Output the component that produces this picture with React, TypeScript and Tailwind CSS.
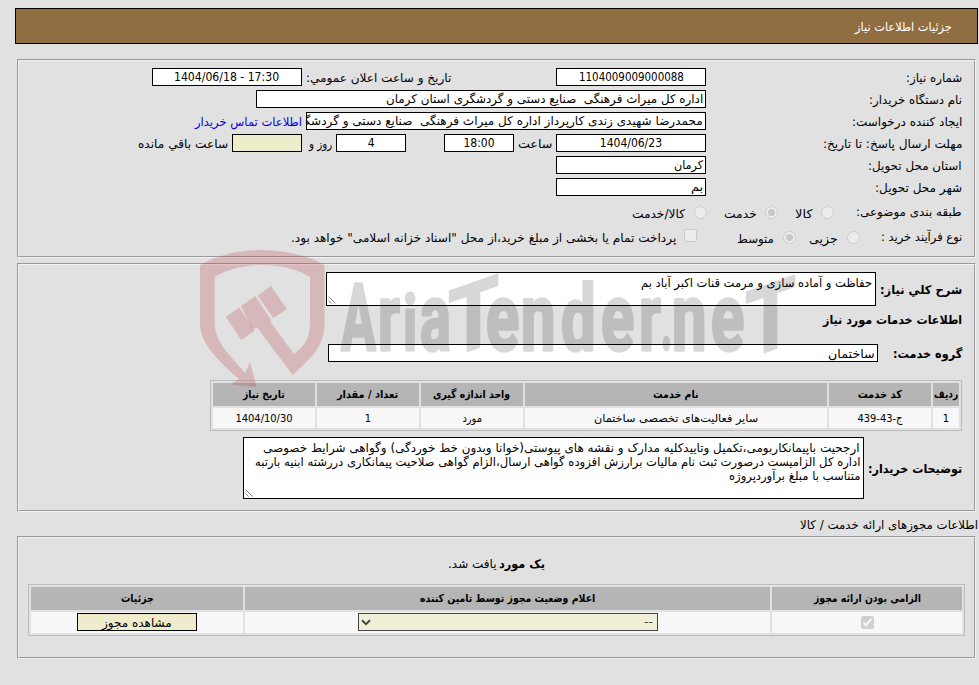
import React, { useLayoutEffect, useRef, useState } from 'react';

// Keeps a single line of text at a fixed advance width
const Fit: React.FC<{ w: number; children: React.ReactNode; className?: string }> = ({ w, children, className = '' }) => {
  const ref = useRef<HTMLSpanElement>(null);
  const [scale, setScale] = useState(1);

  useLayoutEffect(() => {
    if (ref.current) setScale(w / ref.current.offsetWidth);
  }, [w]);

  return (
    <span className={`inline-block shrink-0 whitespace-pre text-right ${className}`} style={{ width: w }}>
      <span ref={ref} className="inline-block origin-right" style={{ transform: `scaleX(${scale})` }}>
        {children}
      </span>
    </span>
  );
};

const Panel: React.FC<{ className: string; children: React.ReactNode }> = ({ className, children }) => (
  <section className={`w-[959px] border border-t-[#9a9a9a] border-l-[#9a9a9a] border-r-[#f2f2f2] border-b-[#f2f2f2] ${className}`}>
    <div className="h-full border border-t-[#f2f2f2] border-l-[#f2f2f2] border-r-[#9a9a9a] border-b-[#9a9a9a]">{children}</div>
  </section>
);

const Field: React.FC<{ className: string; children?: React.ReactNode }> = ({ className, children }) => (
  <div className={`flex h-[18px] shrink-0 items-center overflow-hidden border border-black px-[2px] leading-4 ${className}`}>
    {children}
  </div>
);

const Row: React.FC<{ label: string; w: number; children: React.ReactNode }> = ({ label, w, children }) => (
  <div className="flex h-[18px] items-center">
    <div className="w-64 shrink-0 pt-0.5">
      <Fit w={w}>{label}</Fit>
    </div>
    {children}
  </div>
);

const Radio: React.FC<{ checked?: boolean; className?: string }> = ({ checked, className = '' }) => (
  <span className={`flex size-[13px] shrink-0 items-center justify-center rounded-full border border-[#cbcbcb] bg-[#ececec] ${className}`}>
    {checked && <span className="size-[7px] rounded-full bg-[#c8c8c8]" />}
  </span>
);

const Resizer = () => (
  <svg className="absolute bottom-px left-px" width="8" height="8" viewBox="0 0 8 8" fill="none" stroke="#666" strokeWidth="0.8">
    <path d="M0.5 0.5L7.5 7.5M0.5 4.5L3.5 7.5" />
  </svg>
);

const services = [
  { title: 'ردیف', tw: 24, value: '1', vw: 6, col: 'w-[26px]' },
  { title: 'کد خدمت', tw: 44, value: 'ج-43-439', vw: 45, col: 'w-[102px]' },
  { title: 'نام خدمت', tw: 46, value: 'سایر فعالیت‌های تخصصی ساختمان', vw: 164, col: 'w-[302px]' },
  { title: 'واحد اندازه گیری', tw: 77, value: 'مورد', vw: 20, col: 'w-[102px]' },
  { title: 'تعداد / مقدار', tw: 61, value: '1', vw: 6, col: 'w-[102px]' },
  { title: 'تاریخ نیاز', tw: 42, value: '1404/10/30', vw: 57, col: 'w-[102px]' },
];

// glyph, x, horizontal scale, vertical scale
const letters = [
  ['A', 341, 0.54, 0.97],
  ['r', 378, 0.62, 0.98],
  ['i', 403, 0.56, 0.79],
  ['a', 420, 0.6, 0.98],
  ['e', 486, 0.64, 0.98],
  ['n', 521, 0.64, 0.98],
  ['d', 561, 0.64, 0.95],
  ['e', 601, 0.64, 0.98],
  ['r', 639, 0.62, 0.98],
  ['.', 661, 0.4, 0.9],
  ['n', 672, 0.64, 0.98],
  ['e', 711, 0.64, 0.98],
] as const;

const Watermark = () => (
  <svg className="pointer-events-none absolute top-0 left-0" width="979" height="685" viewBox="0 0 979 685">
    <g fill="#b94149" fillOpacity="0.25">
      <path
        fillRule="evenodd"
        d="M200 265C218 255 240 250 262 250S307 255 324.500 265V323C324 347 313 356 292.700 375L257.500 328L252 329L241 306L255.300 296L271 320L270.500 322L294 354C306 345 310 336 310 323V277C297 269 281 265 262 265S228 269 214.700 277V323C215 342 228 353 245 373L250 362L256.700 387L230.700 384.500L239 379C217 360 200 343 200 323Z"
      />
      <path d="M225.700 316.700L239.300 307.500L254.700 330.700L241.300 340Z" />
      <path d="M257.700 295.700L271 285.700L286.700 309L273.300 318.300Z" />
    </g>
    <g
      direction="ltr"
      opacity="0.15"
      fontFamily="Roboto, sans-serif"
      fontWeight="700"
      fontSize="96"
      stroke="#000"
      strokeWidth="3.500"
      strokeLinejoin="round"
    >
      {letters.map(([ch, x, sx, sy], i) => (
        <text key={i} transform={`translate(${x} 350) scale(${sx} ${sy})`}>{ch}</text>
      ))}
      <text transform="matrix(0.86 -0.3 0 0.97 448 358)" strokeWidth="2">T</text>
      <text transform="matrix(0.86 -0.3 0 0.97 745 359)" strokeWidth="2">T</text>
    </g>
  </svg>
);

export default function App() {
  return (
    <div
      dir="rtl"
      className="relative h-[685px] w-[979px] overflow-hidden bg-[#e1e1e1] pt-2 pr-px font-['DejaVu_Sans_Condensed','DejaVu_Sans',sans-serif] text-xs leading-[18px] text-black"
    >
      <header className="flex h-9 w-[963px] items-center border border-black bg-[#906e41] pt-px pr-[25px] text-white">
        <Fit w={97}>جزئیات اطلاعات نیاز</Fit>
      </header>

      <div className="pr-0.5">
        <Panel className="mt-[15px] h-[199px]">
          <div className="flex flex-col gap-1 pt-[7px] pr-3">
            <Row label="شماره نیاز:" w={56}>
              <Field className="w-[150px] justify-center bg-white"><Fit w={105}>1104009009000088</Fit></Field>
              <Fit w={145} className="mr-[105px] pt-0.5">تاریخ و ساعت اعلان عمومي:</Fit>
              <Field className="mr-1 w-[150px] justify-center bg-white"><Fit w={105}>17:30 - 1404/06/18</Fit></Field>
            </Row>
            <Row label="نام دستگاه خریدار:" w={93}>
              <Field className="w-[450px] bg-white"><Fit w={317}>{'اداره کل میراث فرهنگی  صنایع دستی و گردشگری استان کرمان'}</Fit></Field>
            </Row>
            <Row label="ایجاد کننده درخواست:" w={110}>
              <Field className="w-[400px] bg-white"><Fit w={483}>{'محمدرضا شهیدی زندی کارپرداز اداره کل میراث فرهنگی  صنایع دستی و گردشگری استان کرمان'}</Fit></Field>
              <a className="mr-1 pt-0.5 text-[#0000ee]"><Fit w={107}>اطلاعات تماس خریدار</Fit></a>
            </Row>
            <Row label="مهلت ارسال پاسخ: تا تاریخ:" w={139}>
              <Field className="w-[150px] justify-center bg-white"><Fit w={62}>1404/06/23</Fit></Field>
              <Fit w={34} className="mr-1 pt-0.5">ساعت</Fit>
              <Field className="mr-1 w-[70px] justify-center bg-white"><Fit w={31}>18:00</Fit></Field>
              <Field className="mr-[38px] w-[70px] justify-center bg-white"><Fit w={7}>4</Fit></Field>
              <Fit w={23} className="mr-1 pt-0.5">روز و</Fit>
              <Field className="mr-[7px] w-[70px] bg-[#eeeccb]" />
              <Fit w={90} className="mr-1 pt-0.5">ساعت باقي مانده</Fit>
            </Row>
            <Row label="استان محل تحویل:" w={94}>
              <Field className="w-[150px] bg-white"><Fit w={29}>کرمان</Fit></Field>
            </Row>
            <Row label="شهر محل تحویل:" w={87}>
              <Field className="w-[150px] bg-white"><Fit w={12}>بم</Fit></Field>
            </Row>
          </div>
          <div className="mt-[7px] flex h-[18px] items-center pr-3">
            <Fit w={106}>طبقه بندی موضوعی:</Fit>
            <Radio className="mr-[22px]" />
            <Fit w={18} className="mr-[8px] pt-1">کالا</Fit>
            <Radio checked className="mr-[17px]" />
            <Fit w={33} className="mr-[8px] pt-1">خدمت</Fit>
            <Radio className="mr-[17px]" />
            <Fit w={53} className="mr-[9px] pt-1">کالا/خدمت</Fit>
          </div>
          <div className="mt-[7px] flex h-[18px] items-center pr-3">
            <Fit w={81}>نوع فرآیند خرید :</Fit>
            <Radio className="mr-[21px]" />
            <Fit w={29} className="mr-[9px] pt-1">جزیی</Fit>
            <Radio checked className="mr-[13px]" />
            <Fit w={37} className="mr-[9px] pt-1">متوسط</Fit>
            <span className="mr-10 mb-[3px] size-[13px] shrink-0 rounded-[2px] border border-[#cbcbcb] bg-[#ececec]" />
            <Fit w={385} className="mr-2 pt-0.5">پرداخت تمام یا بخشی از مبلغ خرید،از محل "اسناد خزانه اسلامی" خواهد بود.</Fit>
          </div>
        </Panel>

        <Panel className="mt-[5px] h-[249px]">
          <div className="pt-[7px] pr-3">
            <div className="flex h-[34px] items-center">
              <Fit w={82} className="pt-0.5 font-bold">شرح کلي نیاز:</Fit>
              <div className="relative mr-1 h-[34px] w-[550px] border border-black bg-white pt-px pr-[3px]">
                <Fit w={231}>حفاظت و آماده سازی و مرمت قنات اکبر آباد بم</Fit>
                <Resizer />
              </div>
            </div>
            <div className="mt-[5px] flex h-[18px] items-center font-bold"><Fit w={139}>اطلاعات خدمات مورد نیاز</Fit></div>
            <div className="mt-[15px] flex h-[18px] items-center">
              <Fit w={69} className="pt-0.5 font-bold">گروه خدمت:</Fit>
              <Field className="mr-[15px] w-[550px] bg-white"><Fit w={47} className="pt-0.5">ساختمان</Fit></Field>
            </div>
            <div className="mt-[18px] flex h-[51px] w-[752px] gap-0.5 border border-[#bdbdbd] p-0.5 text-[11px]">
              {services.map((s) => (
                <div key={s.title} className={`flex flex-col gap-0.5 ${s.col}`}>
                  <div className="flex h-[23px] items-center justify-center bg-[#b5b5b5] pt-px font-bold"><Fit w={s.tw}>{s.title}</Fit></div>
                  <div className="flex h-5 items-center justify-center bg-[#f7f7f7] pt-0.5"><Fit w={s.vw}>{s.value}</Fit></div>
                </div>
              ))}
            </div>
            <div className="mt-1.5 flex h-[62px] items-center">
              <Fit w={94} className="pt-px font-bold">توضیحات خریدار:</Fit>
              <div className="relative mr-1 flex h-[62px] w-[621px] flex-col border border-black bg-white pt-[3px] pr-[3px] leading-[14px]">
                <Fit w={597}>ارجحیت باپیمانکاربومی،تکمیل وتاییدکلیه مدارک و نقشه های پیوستی(خوانا وبدون خط خوردگی) وگواهی شرایط خصوصی</Fit>
                <Fit w={605}>اداره کل الزامیست درصورت ثبت نام مالیات برارزش افزوده گواهی ارسال،الزام گواهی صلاحیت پیمانکاری دررشته ابنیه بارتبه</Fit>
                <Fit w={131}>متناسب با مبلغ برآوردپروژه</Fit>
                <Resizer />
              </div>
            </div>
          </div>
        </Panel>
      </div>

      <div className="flex h-6 items-center pt-0.5"><Fit w={178}>اطلاعات مجوزهای ارائه خدمت / کالا</Fit></div>

      <div className="pr-0.5">
        <Panel className="h-[123px]">
          <div className="flex h-[46px] items-center justify-center gap-[3px] pt-1.5">
            <Fit w={46} className="font-bold">یک مورد</Fit>
            <Fit w={49}>یافت شد.</Fit>
          </div>
          <div className="mr-[9px] flex h-[52px] w-[937px] gap-0.5 border border-[#bdbdbd] p-0.5 text-[11px] font-bold">
            <div className="flex w-[190px] flex-col gap-0.5">
              <div className="flex h-[23px] items-center justify-center bg-[#b5b5b5]"><Fit w={107}>الزامی بودن ارائه مجوز</Fit></div>
              <div className="flex h-[21px] items-center justify-center bg-[#f7f7f7]">
                <span className="flex size-[13px] items-center justify-center rounded-[2px] bg-[#d0d0d0]">
                  <svg width="11" height="11" viewBox="0 0 11 11" fill="none" stroke="#f7f7f7" strokeWidth="2">
                    <path d="M1.500 5.700L4 8.200L9.300 2" />
                  </svg>
                </span>
              </div>
            </div>
            <div className="flex w-[525px] flex-col gap-0.5">
              <div className="flex h-[23px] items-center justify-center bg-[#b5b5b5]"><Fit w={175}>اعلام وضعیت مجوز توسط تامین کننده</Fit></div>
              <div className="flex h-[21px] justify-center bg-[#f7f7f7] pt-px font-normal">
                <div className="flex h-[18px] w-[300px] items-center justify-between border border-[#444] bg-[#f0f0d8] pr-1 pl-0.5 text-xs text-[#444]">
                  <Fit w={9}>--</Fit>
                  <svg width="10" height="7" viewBox="0 0 10 7" fill="none" stroke="#444" strokeWidth="2">
                    <path d="M1 1.200L5 5.200L9 1.200" />
                  </svg>
                </div>
              </div>
            </div>
            <div className="flex w-[212px] flex-col gap-0.5">
              <div className="flex h-[23px] items-center justify-center bg-[#b5b5b5]"><Fit w={33}>جزئیات</Fit></div>
              <div className="flex h-[21px] justify-center bg-[#f7f7f7] pt-px font-normal">
                <button className="flex h-[18px] w-[120px] items-center justify-center border border-black bg-[#eeeccb] pt-0.5 text-xs">
                  <Fit w={70}>مشاهده مجوز</Fit>
                </button>
              </div>
            </div>
          </div>
        </Panel>
      </div>

      <Watermark />
    </div>
  );
}
